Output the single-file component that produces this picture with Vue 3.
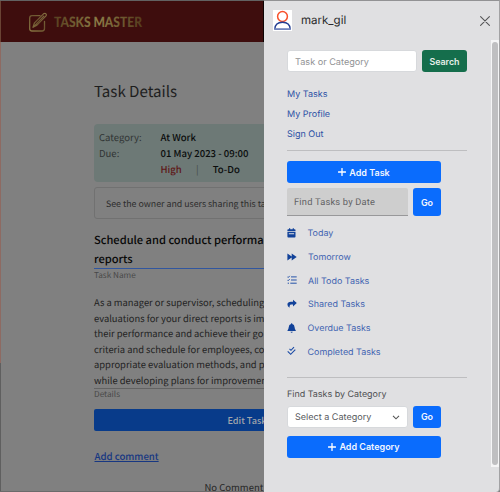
<script setup>
const account = ['My Tasks', 'My Profile', 'Sign Out']
const filters = [
  { icon: 'calendar', label: 'Today', cls: 'f-today' },
  { icon: 'forward', label: 'Tomorrow', cls: 'f-tomorrow' },
  { icon: 'list', label: 'All Todo Tasks', cls: 'f-all' },
  { icon: 'share', label: 'Shared Tasks', cls: 'f-shared' },
  { icon: 'bell', label: 'Overdue Tasks', cls: 'f-overdue' },
  { icon: 'check', label: 'Completed Tasks', cls: 'f-completed' },
]
const details = [
  'As a manager or supervisor, scheduling',
  'evaluations for your direct reports is im',
  'their performance and achieve their go',
  'criteria and schedule for employees, co',
  'appropriate evaluation methods, and p',
  'while developing plans for improvemen',
]
</script>

<template>
  <div class="screen">
    <main class="page">
      <header class="navbar">
        <svg class="logo" viewBox="0 0 120 24" width="120" height="24">
          <defs>
            <linearGradient id="gold" x1="0" x2="1" y1="0" y2="0">
              <stop offset="0" stop-color="#584020" />
              <stop offset=".5" stop-color="#8b7c46" />
              <stop offset="1" stop-color="#553b1d" />
            </linearGradient>
            <linearGradient id="gold2" gradientUnits="userSpaceOnUse" x1="0" x2="20" y1="20" y2="0">
              <stop offset="0" stop-color="#8a7743" />
              <stop offset=".5" stop-color="#6c5530" />
              <stop offset="1" stop-color="#8a7544" />
            </linearGradient>
          </defs>
          <g fill="none" stroke="url(#gold2)" stroke-linejoin="round" stroke-linecap="round">
            <path stroke-width="1.3" d="M12 4.6H4Q1.7 4.6 1.7 7V17.5Q1.7 20 4 20H14Q16.500 20 16.500 17.500V10.5" />
            <path stroke-width="1.2" d="M5 16.300 6.5 11.8 15.5 2.8Q17 1.700 18 2.900 18.9 3.900 17.8 5.200L9 14.100ZM5 16.300 15.8 5.100" />
          </g>
          <text x="26" y="16.300" textLength="88" lengthAdjust="spacingAndGlyphs" fill="url(#gold)">TASKS MASTER</text>
        </svg>
      </header>
      <section class="content">
        <h1>Task Details</h1>
        <div class="summary">
          <span class="label">Category:</span><span class="value">At Work</span>
          <span class="label">Due:</span><span class="value">01 May 2023 - 09:00</span>
          <span class="status"><b class="high">High</b><i>|</i><b>To-Do</b></span>
        </div>
        <div class="sharing">See the owner and users sharing this tas</div>
        <h2><span>Schedule and conduct performa</span><span>reports</span></h2>
        <small>Task Name</small>
        <div class="details"><p v-for="line in details" :key="line">{{ line }}</p></div>
        <small class="under">Details</small>
        <button class="edit">Edit Task</button>
        <a class="comment">Add comment</a>
        <p class="none">No Comment</p>
      </section>
    </main>

    <aside class="drawer">
      <header class="user">
        <svg class="avatar" viewBox="0 0 19 21" width="19" height="21">
          <rect width="19" height="21" fill="#fff" />
          <circle cx="9.5" cy="6.5" r="4.9" fill="none" stroke="#f8502a" stroke-width="1.5" />
          <path d="M1.8 19.2C2 15 4.8 12.3 9.5 12.3S17 15 17.2 19.2" fill="none" stroke="#243f93" stroke-width="1.4" />
          <path d="M1.2 19.100H17.8" stroke="#6f82bc" stroke-width="1.8" />
        </svg>
        <span class="name">mark_gil</span>
        <svg class="close" viewBox="0 0 10 10" width="10" height="10"><path d="M.6.6 9.4 9.4M9.4.6.6 9.4" stroke="#555557" stroke-width="1.1" stroke-linecap="round" /></svg>
      </header>
      <div class="body">
        <div class="row search"><div class="field">Task or Category</div><button class="green">Search</button></div>
        <nav class="account"><a v-for="a in account" :key="a">{{ a }}</a></nav>
        <hr />
        <button class="blue add">
          <svg viewBox="0 0 8 8" width="8" height="8"><path d="M4 .5V7.5M.5 4H7.5" stroke="#fff" stroke-width="1.3" stroke-linecap="round" /></svg>Add Task
        </button>
        <div class="row date"><div class="field">Find Tasks by Date</div><button class="blue">Go</button></div>
        <nav class="filters">
          <a v-for="f in filters" :key="f.label" :class="f.cls">
            <svg viewBox="0 0 10 10" width="10" height="10">
              <path v-if="f.icon === 'calendar'" fill-rule="evenodd" d="M2 .2H3.200V1.300H5.700V.2H6.900V1.300H7.700Q8.500 1.300 8.500 2.100V3.200H.4V2.100Q.4 1.300 1.200 1.300H2ZM.4 3.900H8.500V8.500Q8.500 9.400 7.700 9.400H1.200Q.4 9.400.4 8.500ZM1.800 5.200V6.200H7.100V5.200Z" />
              <path v-else-if="f.icon === 'forward'" d="M.4 1.500 4.700 4.500V1.500L9.700 5 4.700 8.500V5.500L.4 8.500Z" />
              <g v-else-if="f.icon === 'list'" fill="none" stroke="currentColor" stroke-width=".95"><path d="M.4 1.700 1.200 2.500 2.700.9M.4 4.900 1.200 5.700 2.700 4.100M4 1.900H9.700M4 5H9.700M3.300 8.200H9.700M.7 8.200H2" /></g>
              <path v-else-if="f.icon === 'share'" d="M6 .8 9.800 4.100 6 7.400V5.400H4Q2.300 5.500 2.600 8.700.3 7.400.4 5.200.6 2.700 4 2.700H6Z" />
              <path v-else-if="f.icon === 'bell'" d="M4.100.3H5.200V1Q7.500 1.600 7.600 4.200 7.700 6.300 8.800 7.500V8.100H.5V7.500Q1.600 6.300 1.700 4.200 1.800 1.600 4.100 1ZM3.500 8.700H5.800Q5.500 9.800 4.650 9.800T3.500 8.700Z" />
              <path v-else d="M2.500 2.800 4 4.300 7 1.200M.7 5.300 3.700 8.300 8.300 3.600" fill="none" stroke="currentColor" stroke-width="1.15" />
            </svg>
            <span>{{ f.label }}</span>
          </a>
        </nav>
        <hr />
        <p class="caption">Find Tasks by Category</p>
        <div class="row category">
          <div class="field">Select a Category<svg viewBox="0 0 8 5" width="8" height="5"><path d="M1 .8 4 3.800 7 .8" fill="none" stroke="#555" stroke-width="1.1" /></svg></div>
          <button class="blue">Go</button>
        </div>
        <button class="blue add">
          <svg viewBox="0 0 8 8" width="8" height="8"><path d="M4 .5V7.500M.5 4H7.500" stroke="#fff" stroke-width="1.3" stroke-linecap="round" /></svg>Add Category
        </button>
      </div>
      <div class="scrollbar"><div class="thumb"></div></div>
    </aside>
  </div>
</template>

<style>
body { margin: 0; overflow: hidden; background: #808080; }
</style>
<style scoped>
* { box-sizing: border-box; }
.screen { position: relative; width: 500px; height: 492px; overflow: hidden; background: #808080; font-family: "Noto Sans CJK SC", "Noto Sans", sans-serif; white-space: nowrap; text-rendering: geometricPrecision; }
h1, h2, p { margin: 0; font-weight: 400; }
button { border: 0; padding: 0; margin: 0; font: inherit; color: #fff; }
.page { width: 264px; height: 492px; overflow: hidden; border-top: 1px solid #626262; border-bottom: 1px solid #6b6b6b; padding-left: 1px; background: linear-gradient(#6a4334 0 41px, #8e6a62 41px 362px, #5f5f5f 362px) 0 0 / 1px 100% no-repeat; }
.navbar { height: 41px; background: #3e0d0d; padding: 10px 0 0 27px; border-right: 1px solid #0c0303; }
.logo { display: block; }
.logo text { font: 900 14.3px Lato, sans-serif; }
.content { width: 400px; padding-left: 93px; display: flex; flex-direction: column; }
h1 { margin-top: 37px; height: 24px; line-height: 24px; font-size: 15.1px; color: #1e1e1e; }
.summary { margin-top: 21px; height: 58px; padding: 5px 5px 0; border-radius: 4px; background: #6d7976; display: grid; grid-template-columns: 61.500px 1fr; grid-template-rows: repeat(3, 16px); line-height: 16px; font-size: 9.550px; color: #303434; }
.value, .status b { font-weight: 500; color: #0b0d0d; }
.status { grid-column: 2; display: flex; }
.status i { font-style: normal; width: 31px; text-align: center; color: #454c4a; }
.status .high { color: #5e1616; }
.sharing { margin-top: 5px; height: 32px; line-height: 31px; padding-left: 11px; border: 1px solid #717171; border-radius: 3px; font-size: 8.8px; color: #2d2d2d; }
h2 { margin-top: 11px; height: 38.600px; padding-top: 1px; border-bottom: 1px solid #31569f; display: flex; flex-direction: column; line-height: 18.500px; font-size: 11.1px; font-weight: 500; color: #080808; }
small { height: 12px; line-height: 12px; font-size: 8.200px; color: #484848; }
.under { line-height: 11px; }
.details { margin-top: 13.400px; padding-top: 1px; height: 95px; border-bottom: 1px solid #636363; line-height: 15.600px; font-size: 9.400px; color: #222; }
.edit { margin-top: 8px; height: 22px; border-radius: 2px; background: #083b8a; color: #a2a5ab; font-size: 9.1px; font-weight: 500; text-align: left; padding-left: 133.500px; }
.comment { align-self: flex-start; margin-top: 16px; height: 18px; line-height: 18px; margin-left: .5px; color: #173782; font-size: 9.6px; font-weight: 500; text-decoration: underline; }
.none { margin: 13px 0 0 110.500px; line-height: 18px; font-size: 9.500px; color: #262626; }

.drawer { position: absolute; top: 0; right: 0; width: 236px; height: 492px; background: #e0e0e2; border-top: 1px solid #929294; border-right: 1px solid #a2a2a4; border-radius: 0 0 4px 0; font-family: Inter, "Liberation Sans", sans-serif; color: #46474a; }
.user { display: flex; align-items: center; height: 36px; padding: 3px 9px 0 9px; }
.name { margin: -1px 0 0 9px; font-size: 11.5px; color: #29292b; }
.close { margin-left: auto; }
.body { width: 203px; padding: 13px 0 0 23px; display: flex; flex-direction: column; }
.row { display: flex; }
.field { display: flex; align-items: center; font-size: 9.05px; background: #fff; border: 1px solid #d7d9dc; border-radius: 3px; padding-left: 7px; }
.search { height: 22px; gap: 5px; }
.search .field { width: 130px; color: #919294; font-size: 9.15px; padding-top: 2px; }
.green { width: 45px; border-radius: 3px; background: #156e4c; font-size: 8.9px; font-weight: 600; color: #e5eee9; padding-top: 1px; }
.account { margin-top: 13px; display: flex; flex-direction: column; font-size: 9px; line-height: 20px; color: #2c51a5; }
hr { width: 180px; height: 1px; border: 0; background: #bebec0; margin: 5px 0 10px; flex: none; }
.blue { background: #0a6cfd; border-radius: 3px; font-size: 9px; font-weight: 600; color: #f1f6ff; }
.add { width: 154px; height: 22px; display: flex; align-items: center; justify-content: center; gap: 3px; }
.date { margin-top: 5px; height: 28px; gap: 5px; }
.row .blue { width: 28px; }
.date .field, .category .field { width: 121px; }
.date .field { background: #cecece; border: 0; border-bottom: 1px solid #98989a; border-radius: 2px 2px 0 0; color: #626264; font: 9.3px Roboto, sans-serif; letter-spacing: .2px; padding-top: 1px; }
.filters { margin-top: 5px; display: flex; flex-direction: column; font-size: 8.95px; color: #4163b1; }
.filters a { display: flex; align-items: center; height: 23.700px; gap: 11px; }
.filters span { padding-top: 2px; }
.filters svg { color: #1b4ba5; fill: #124299; }
.f-today, .f-overdue, .f-completed { gap: 10.500px !important; }
.filters + hr { margin: 13.500px 0 9px; }
.caption { font-size: 8.95px; line-height: 16px; color: #4d4e51; }
.category { margin-top: 3px; height: 22px; gap: 5px; }
.category .field { justify-content: space-between; padding-right: 7px; padding-top: 1px; color: #57595d; }
.category + .add { margin-top: 8px; }
.scrollbar { position: absolute; right: 0; top: 39px; width: 8px; height: 427px; padding: 2px 1px; background: #f5f5f6; }
.thumb { height: 423px; border-radius: 3px; background: #bfbfc1; }
</style>
